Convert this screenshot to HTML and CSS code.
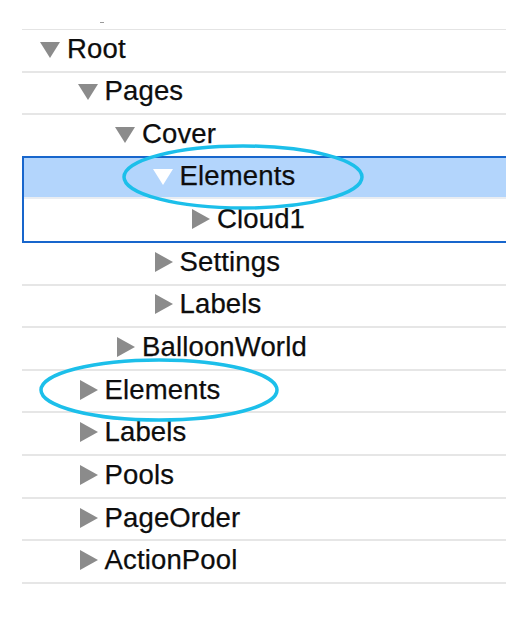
FILE: index.html
```html
<!DOCTYPE html>
<html>
<head>
<meta charset="utf-8">
<link rel="stylesheet" href="styles.css">
</head>
<body>
<div class="page">
  <div class="top-strip"><span class="clip-mark"></span></div>
  <div class="tree">
    <div class="row l0"><span class="arrow"><span class="tri down"></span></span><span class="label">Root</span></div>
    <div class="row l1"><span class="arrow"><span class="tri down"></span></span><span class="label">Pages</span></div>
    <div class="row l2 before-group"><span class="arrow"><span class="tri down"></span></span><span class="label">Cover</span></div>
    <div class="group">
      <div class="row l3 selected"><span class="arrow"><span class="tri down"></span></span><span class="label">Elements</span></div>
      <div class="row l4 last"><span class="arrow"><span class="tri right"></span></span><span class="label">Cloud1</span></div>
    </div>
    <div class="row l3"><span class="arrow"><span class="tri right"></span></span><span class="label">Settings</span></div>
    <div class="row l3"><span class="arrow"><span class="tri right"></span></span><span class="label">Labels</span></div>
    <div class="row l2"><span class="arrow"><span class="tri right"></span></span><span class="label">BalloonWorld</span></div>
    <div class="row l1"><span class="arrow"><span class="tri right"></span></span><span class="label">Elements</span></div>
    <div class="row l1"><span class="arrow"><span class="tri right"></span></span><span class="label">Labels</span></div>
    <div class="row l1"><span class="arrow"><span class="tri right"></span></span><span class="label">Pools</span></div>
    <div class="row l1"><span class="arrow"><span class="tri right"></span></span><span class="label">PageOrder</span></div>
    <div class="row l1"><span class="arrow"><span class="tri right"></span></span><span class="label">ActionPool</span></div>
  </div>
  <svg class="marks" width="528" height="628" viewBox="0 0 528 628">
    <ellipse cx="243" cy="177" rx="119" ry="31" fill="none" stroke="#1cbfea" stroke-width="3.5"/>
    <ellipse cx="159" cy="390" rx="118" ry="30" fill="none" stroke="#1cbfea" stroke-width="3.5"/>
  </svg>
</div>
</body>
</html>
```
FILE: styles.css
```css
html, body {
  margin: 0;
  padding: 0;
  background: #ffffff;
}

.page {
  position: relative;
  width: 528px;
  height: 628px;
  overflow: hidden;
  font-family: "Liberation Sans", Arial, Helvetica, sans-serif;
  color: #0d0d0d;
}

.top-strip {
  height: 29px;
  margin-left: 22px;
  width: 484px;
  position: relative;
}

.clip-mark {
  display: block;
  position: absolute;
  left: 78px;
  top: 22px;
  width: 4px;
  height: 1px;
  background: #9a9a9a;
}

.tree {
  margin-left: 22px;
  width: 484px;
  border-top: 1px solid #e4e4e4;
}

.row {
  box-sizing: border-box;
  height: 42.65px;
  border-bottom: 2px solid #e6e6e6;
  display: flex;
  align-items: center;
  padding-bottom: 3px;
  font-size: 27.5px;
  letter-spacing: 0.15px;
  line-height: 30px;
  -webkit-text-stroke: 0.25px #0d0d0d;
}

.row.before-group {
  border-bottom-color: transparent;
}

.l0 { padding-left: 18px; }
.l1 { padding-left: 55.5px; }
.l2 { padding-left: 93px; }
.l3 { padding-left: 130.5px; }
.l4 { padding-left: 168px; }

.group {
  margin-top: -2px;
  border-top: 2px solid #1866cc;
  border-left: 2px solid #1866cc;
  border-bottom: 2px solid #1866cc;
}

.group .l3 { padding-left: 128.5px; }
.group .l4 { padding-left: 166px; }

.row.selected {
  background: #b3d5fc;
  border-bottom-color: #e9edf2;
  height: 41.5px;
}

.row.last {
  border-bottom: none;
  height: 41.5px;
}

.arrow {
  width: 27px;
  flex: none;
  display: flex;
  justify-content: flex-end;
  align-items: center;
  padding-right: 7px;
  box-sizing: border-box;
}

.tri {
  display: block;
  width: 0;
  height: 0;
}

.tri.down {
  border-left: 10px solid transparent;
  border-right: 10px solid transparent;
  border-top: 16px solid #8b8b8b;
  margin-top: 2px;
}

.tri.right {
  border-top: 10px solid transparent;
  border-bottom: 10px solid transparent;
  border-left: 18px solid #8b8b8b;
}

.selected .tri.down {
  border-top-color: #ffffff;
}

.label {
  white-space: nowrap;
}

.marks {
  position: absolute;
  left: 0;
  top: 0;
  pointer-events: none;
}
```
